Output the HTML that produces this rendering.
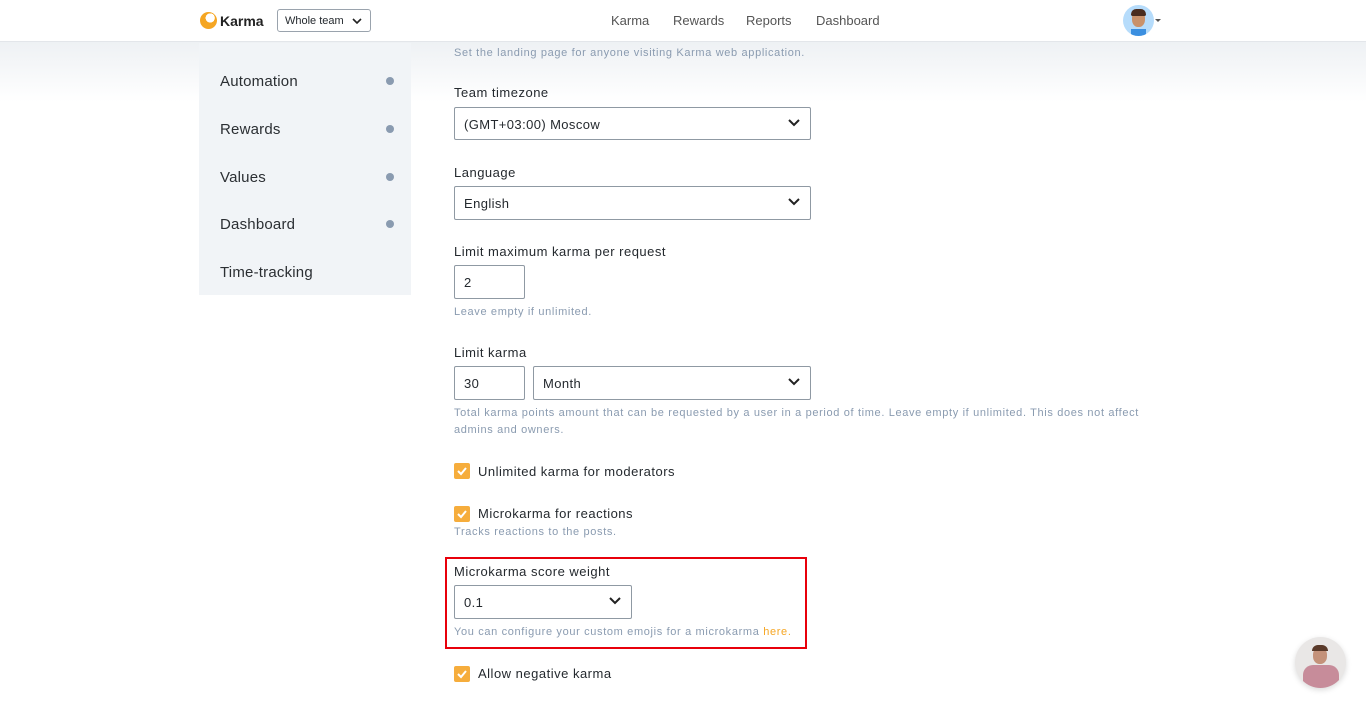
<!DOCTYPE html>
<html><head><meta charset="utf-8"><style>
*{box-sizing:border-box;margin:0;padding:0}
body{width:1366px;height:705px;overflow:hidden;background:#fff;font-family:"Liberation Sans",sans-serif;color:#24292e;position:relative}
.hdr{position:absolute;top:0;left:0;right:0;height:42px;background:#fff;border-bottom:1px solid #e3e6ea;z-index:2}
.shadow{position:absolute;top:42px;left:0;right:0;height:60px;background:linear-gradient(#eef1f4,#fff)}
.logo{position:absolute;left:200px;top:12px;display:flex;align-items:center;font-size:14px;font-weight:bold;color:#222}
.logo i{width:17px;height:17px;border-radius:50%;background:radial-gradient(circle at 60% 35%,#fff 0 30%,transparent 31%),#f5a623;margin-right:3px;display:inline-block}
.team{position:absolute;left:277px;top:9px;width:94px;height:23px;border:1px solid #9aa3ad;border-radius:3px;font-size:11px;padding:5px 7px}
.nav{position:absolute;top:13px;font-size:13px;color:#555}
.side{position:absolute;left:199px;top:43px;width:212px;height:252px;background:#f1f4f7}
.side div{position:absolute;left:21px;font-size:15px;color:#2b2f33;letter-spacing:.2px}
.side b{position:absolute;left:187px;width:8px;height:8px;border-radius:50%;background:#8a9bb0}
.lbl{position:absolute;left:454px;font-size:13px;color:#24292e;letter-spacing:.5px}
.help{position:absolute;left:454px;font-size:11px;color:#8a9bb0;line-height:17px;letter-spacing:.65px}
.sel{position:absolute;border:1px solid #8f99a3;border-radius:2px;font-size:13px;padding:9px 9px 7px;background:#fff;letter-spacing:.4px}
.sel svg{position:absolute;right:10px;top:11px}
.cb{position:absolute;left:454px;width:16px;height:16px;border-radius:2px;background:#f6ad3c}
.cbl{position:absolute;left:478px;font-size:13px;letter-spacing:.5px}
</style></head><body>
<div class="shadow"></div>
<div class="hdr">
<div class="logo"><i></i>Karma</div>
<div class="team">Whole team<svg style="position:absolute;right:8px;top:8px" width="10" height="6"><path d="M1 1l4 4 4-4" stroke="#222" stroke-width="1.6" fill="none"/></svg></div>
<div class="nav" style="left:611px">Karma</div>
<div class="nav" style="left:673px">Rewards</div>
<div class="nav" style="left:746px">Reports</div>
<div class="nav" style="left:816px">Dashboard</div>
<div style="position:absolute;left:1123px;top:5px;width:31px;height:31px;border-radius:50%;background:#b6dcfb;overflow:hidden"><div style="position:absolute;left:9px;top:6px;width:13px;height:16px;border-radius:45%;background:#c9916a"></div><div style="position:absolute;left:8px;top:4px;width:15px;height:7px;border-radius:6px 6px 2px 2px;background:#4a2c1e"></div><div style="position:absolute;left:8px;top:24px;width:15px;height:8px;background:#3b8fe0"></div></div>
<div style="position:absolute;left:1155px;top:19px;border:3px solid transparent;border-top:3px solid #555"></div>
</div>
<div class="side">
<div style="top:30px">Automation</div><b style="top:34px"></b>
<div style="top:78px">Rewards</div><b style="top:82px"></b>
<div style="top:126px">Values</div><b style="top:130px"></b>
<div style="top:173px">Dashboard</div><b style="top:177px"></b>
<div style="top:221px">Time-tracking</div>
</div>
<div class="help" style="top:45px">Set the landing page for anyone visiting Karma web application.</div>
<div class="lbl" style="top:85px">Team timezone</div>
<div class="sel" style="left:454px;top:107px;width:357px;height:33px">(GMT+03:00) Moscow<svg width="12" height="8"><path d="M1 1l5 5 5-5" stroke="#222" stroke-width="2" fill="none"/></svg></div>
<div class="lbl" style="top:165px">Language</div>
<div class="sel" style="left:454px;top:186px;width:357px;height:34px">English<svg width="12" height="8"><path d="M1 1l5 5 5-5" stroke="#222" stroke-width="2" fill="none"/></svg></div>
<div class="lbl" style="top:244px">Limit maximum karma per request</div>
<div class="sel" style="left:454px;top:265px;width:71px;height:34px">2</div>
<div class="help" style="top:304px">Leave empty if unlimited.</div>
<div class="lbl" style="top:345px">Limit karma</div>
<div class="sel" style="left:454px;top:366px;width:71px;height:34px">30</div>
<div class="sel" style="left:533px;top:366px;width:278px;height:34px">Month<svg width="12" height="8"><path d="M1 1l5 5 5-5" stroke="#222" stroke-width="2" fill="none"/></svg></div>
<div class="help" style="top:405px;width:705px">Total karma points amount that can be requested by a user in a period of time. Leave empty if unlimited. This does not affect admins and owners.</div>
<div class="cb" style="top:463px"><svg width="16" height="16"><path d="M4 8l3 3 5-6" stroke="#fff" stroke-width="2" fill="none"/></svg></div>
<div class="cbl" style="top:464px">Unlimited karma for moderators</div>
<div class="cb" style="top:506px"><svg width="16" height="16"><path d="M4 8l3 3 5-6" stroke="#fff" stroke-width="2" fill="none"/></svg></div>
<div class="cbl" style="top:506px">Microkarma for reactions</div>
<div class="help" style="top:524px">Tracks reactions to the posts.</div>
<div style="position:absolute;left:445px;top:557px;width:362px;height:92px;border:2px solid #e8000b"></div>
<div class="lbl" style="top:564px">Microkarma score weight</div>
<div class="sel" style="left:454px;top:585px;width:178px;height:34px">0.1<svg width="12" height="8"><path d="M1 1l5 5 5-5" stroke="#222" stroke-width="2" fill="none"/></svg></div>
<div class="help" style="top:624px">You can configure your custom emojis for a microkarma <span style="color:#f6a623">here.</span></div>
<div class="cb" style="top:666px"><svg width="16" height="16"><path d="M4 8l3 3 5-6" stroke="#fff" stroke-width="2" fill="none"/></svg></div>
<div class="cbl" style="top:666px">Allow negative karma</div>
<div style="position:absolute;left:1295px;top:637px;width:51px;height:51px;border-radius:50%;background:#e9e7e6;overflow:hidden;box-shadow:0 2px 6px rgba(0,0,0,.15)"><div style="position:absolute;left:18px;top:10px;width:14px;height:17px;border-radius:45%;background:#c4927a"></div><div style="position:absolute;left:17px;top:8px;width:16px;height:6px;border-radius:6px 6px 0 0;background:#5a3a2a"></div><div style="position:absolute;left:8px;top:28px;width:36px;height:25px;border-radius:10px 10px 0 0;background:#c78c9a"></div></div>
</body></html>
